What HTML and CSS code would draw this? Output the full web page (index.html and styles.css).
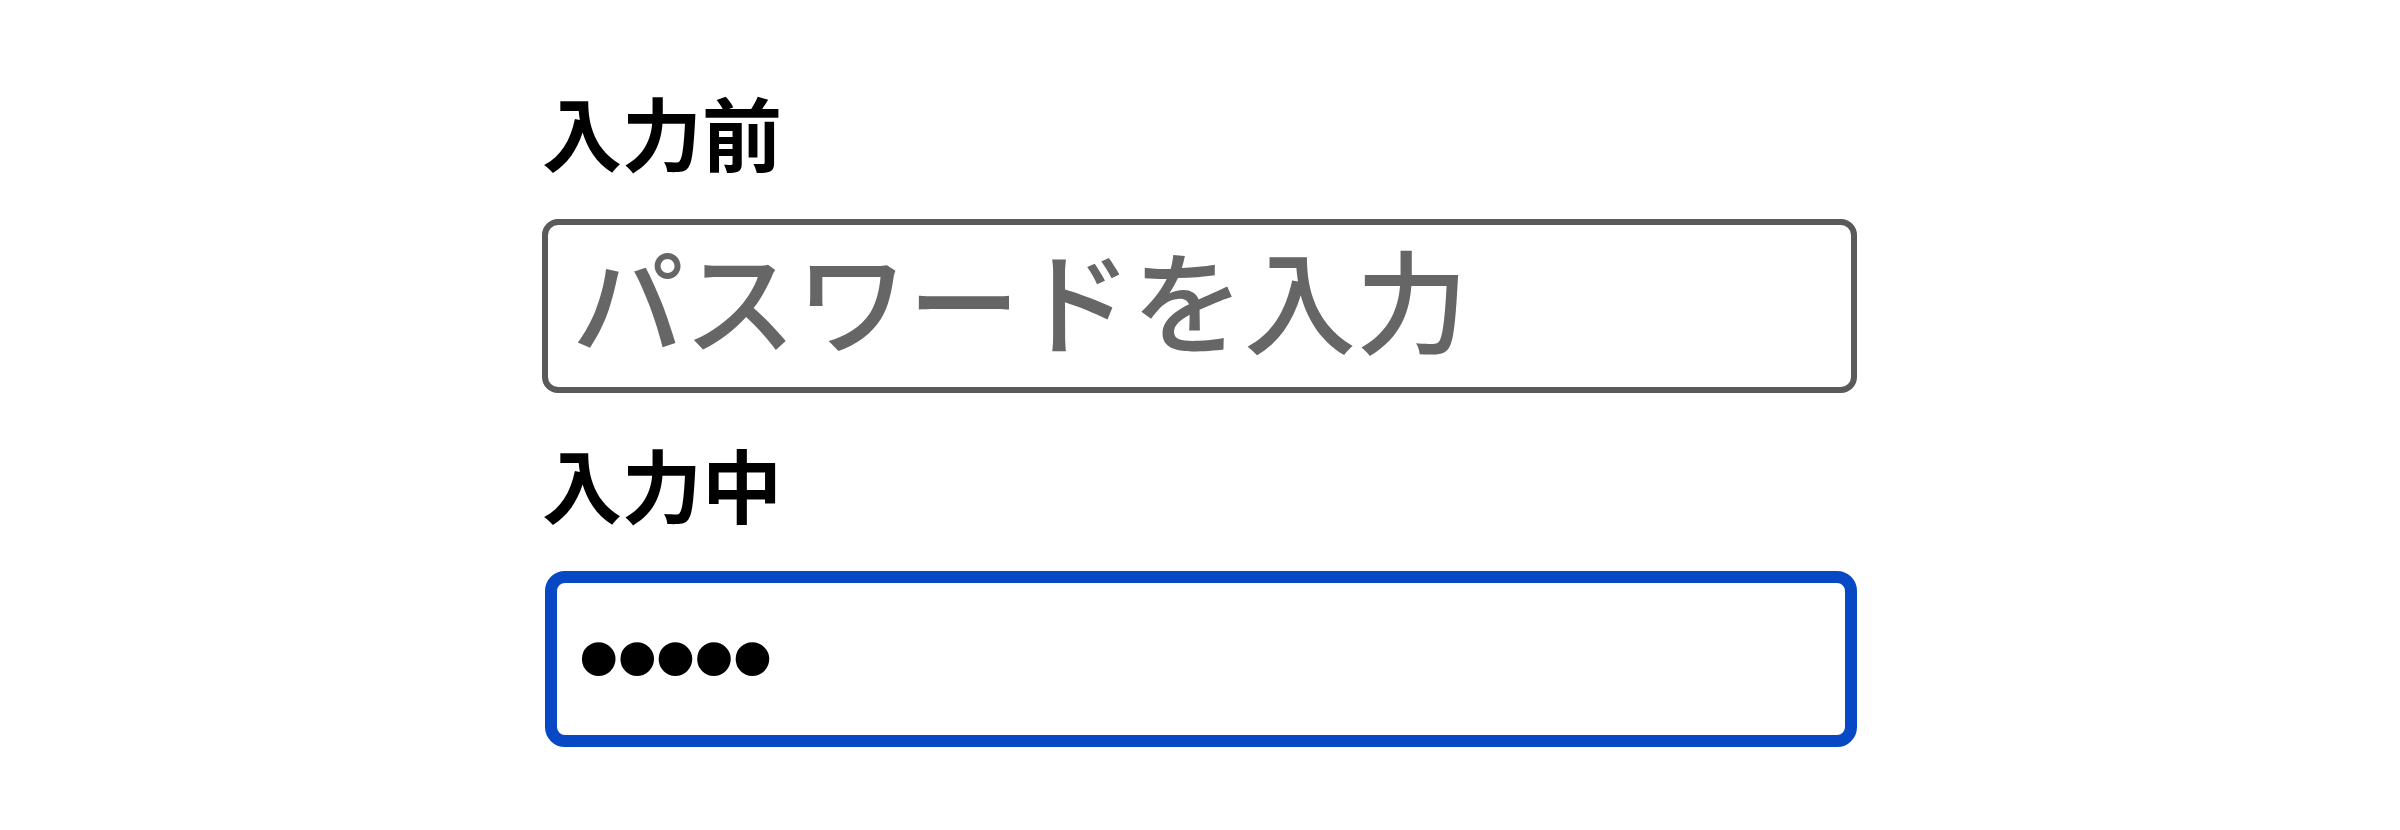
FILE: index.html
```html
<!DOCTYPE html>
<html lang="ja">

<head>
    <meta charset="UTF-8">
    <meta name="viewport" content="width=device-width, initial-scale=1.0">
    <title>パスワード入力</title>
    <link rel="stylesheet" href="styles.css">
</head>

<body>
    <main class="form">
        <div class="field">
            <label class="field-label" for="pw-before">入力前</label>
            <input class="field-input" id="pw-before" type="password" placeholder="パスワードを入力">
        </div>
        <div class="field">
            <label class="field-label" for="pw-typing">入力中</label>
            <!-- 入力中の見た目はクラスで固定 -->
            <input class="field-input field-input--active" id="pw-typing" type="password" value="abcde">
        </div>
    </main>
</body>

</html>
```

FILE: styles.css
```css
body {
    margin: 0;
    background-color: #fff;
    font-family: "Noto Sans CJK JP", sans-serif;
}

.form {
    display: flex;
    flex-direction: column;
    gap: 49px;
    width: 1315px;
    padding: 90px 0 0 542px;
}

.field {
    display: flex;
    flex-direction: column;
    gap: 49px;
}

.field-label {
    font-size: 80px;
    font-weight: 700;
    line-height: 1;
    color: #000;
}

.field-input {
    box-sizing: border-box;
    width: 100%;
    height: 174px;
    margin: 0;
    padding: 0 24px 18px;
    border: 6px solid #5a5a5a;
    border-radius: 16px;
    background-color: #fff;
    font-family: "Noto Sans CJK JP", sans-serif;
    font-size: 112px;
    font-weight: 500;
    line-height: 1;
    color: #000;
    outline: none;
}

.field-input::placeholder {
    color: #666;
    opacity: 1;
}

/* 入力中: 青い太枠 */
.field-input--active {
    width: calc(100% - 3px);
    height: 176px;
    margin-left: 3px;
    padding: 0 20px 4px;
    border: 12px solid #0749c5;
    border-radius: 20px;
    font-family: "Liberation Sans", sans-serif;
    font-size: 124px;
    letter-spacing: -5px;
}
```
